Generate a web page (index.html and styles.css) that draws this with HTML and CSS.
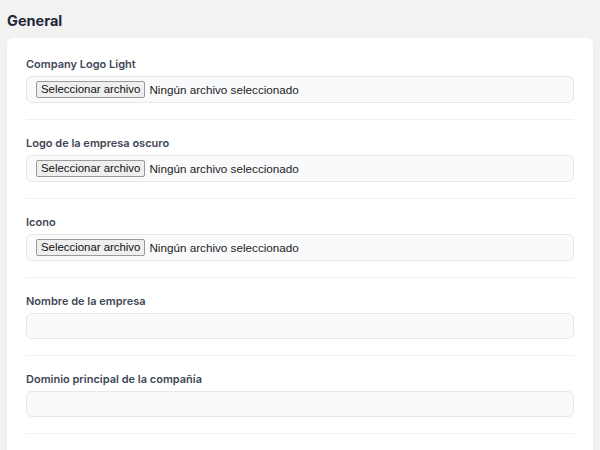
FILE: index.html
```html
<!DOCTYPE html>
<html lang="es">
<head>
    <meta charset="UTF-8">
    <meta name="viewport" content="width=device-width, initial-scale=1.0">
    <title>Ajustes - General</title>
    <link rel="stylesheet" href="styles.css">
</head>
<body>
    <main class="settings">
        <h2 class="section-title">General</h2>
        <div class="card">
            <div class="field">
                <label class="field-label">Company Logo Light</label>
                <div class="file-input">
                    <span class="file-button">Seleccionar archivo</span>
                    <span class="file-name">Ningún archivo seleccionado</span>
                </div>
            </div>
            <div class="field">
                <label class="field-label">Logo de la empresa oscuro</label>
                <div class="file-input">
                    <span class="file-button">Seleccionar archivo</span>
                    <span class="file-name">Ningún archivo seleccionado</span>
                </div>
            </div>
            <div class="field">
                <label class="field-label">Icono</label>
                <div class="file-input">
                    <span class="file-button">Seleccionar archivo</span>
                    <span class="file-name">Ningún archivo seleccionado</span>
                </div>
            </div>
            <div class="field">
                <label class="field-label" for="companyName">Nombre de la empresa</label>
                <input class="text-input" id="companyName" type="text">
            </div>
            <div class="field">
                <label class="field-label" for="companyDomain">Dominio principal de la compañía</label>
                <input class="text-input" id="companyDomain" type="text">
            </div>
        </div>
    </main>
</body>
</html>
```

FILE: styles.css
```css
* {
    margin: 0;
    padding: 0;
    box-sizing: border-box;
}

body {
    font-family: Inter, 'Noto Sans', sans-serif;
    background-color: #f2f2f3;
    min-height: 100vh;
    overflow: hidden;
}

.settings {
    padding: 12px 7px 0;
}

.section-title {
    font-size: 14.5px;
    line-height: 18px;
    font-weight: 700;
    color: #1f2937;
    margin-bottom: 8px;
}

.card {
    background-color: white;
    border-radius: 6px;
    box-shadow: 0 1px 2px rgba(0, 0, 0, 0.06);
    padding: 3px 19px 60px;
}

.field {
    padding: 16px 0;
    border-bottom: 1px solid #f0f1f3;
}

.field-label {
    display: block;
    font-size: 11px;
    line-height: 14px;
    font-weight: 600;
    color: #3f4856;
    margin-bottom: 5px;
}

.file-input,
.text-input {
    display: flex;
    align-items: center;
    width: 100%;
    height: 27px;
    background-color: #f9fafb;
    border: 1px solid #e5e7eb;
    border-radius: 6px;
}

.file-input {
    padding: 0 9px;
    gap: 4px;
}

.file-button {
    font-family: 'Liberation Sans', Arial, sans-serif;
    font-size: 11.4px;
    line-height: 15px;
    color: #111;
    background-color: #efefef;
    border: 1px solid #9a9a9a;
    border-radius: 2px;
    padding: 0 4px;
}

.file-name {
    font-family: 'Liberation Sans', Arial, sans-serif;
    font-size: 11.7px;
    color: #222;
}

.text-input {
    height: 26px;
    outline: none;
    padding: 0 9px;
}
```
